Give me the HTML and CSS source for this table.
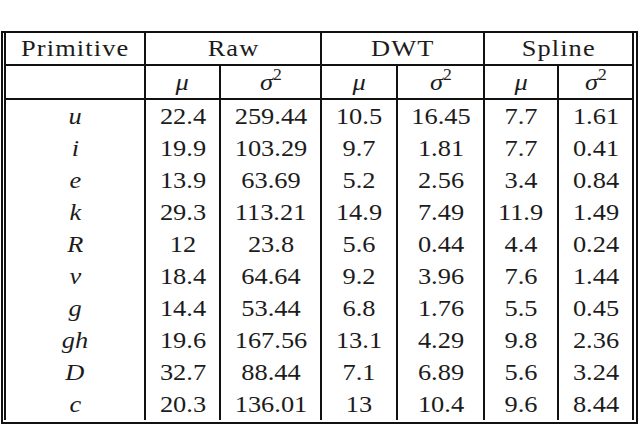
FILE: index.html
```html
<!DOCTYPE html>
<html lang="en">
<head>
    <meta charset="UTF-8">
    <title>Primitive statistics</title>
    <link rel="stylesheet" href="styles.css">
</head>
<body>
    <div class="sheet">
        <div class="grid">
            <div class="cell head"><span class="t word">Primitive</span></div>
            <div class="cell head wide"><span class="t word">Raw</span></div>
            <div class="cell head wide"><span class="t word">DWT</span></div>
            <div class="cell head wide end"><span class="t word">Spline</span></div>

            <div class="cell head sub"></div>
            <div class="cell head sub"><span class="t m">μ</span></div>
            <div class="cell head sub"><span class="t m">σ<sup>2</sup></span></div>
            <div class="cell head sub"><span class="t m">μ</span></div>
            <div class="cell head sub"><span class="t m">σ<sup>2</sup></span></div>
            <div class="cell head sub"><span class="t m">μ</span></div>
            <div class="cell head sub end"><span class="t m">σ<sup>2</sup></span></div>

            <div class="cell"><span class="t m">u</span></div>
            <div class="cell"><span class="t">22.4</span></div>
            <div class="cell"><span class="t">259.44</span></div>
            <div class="cell"><span class="t">10.5</span></div>
            <div class="cell"><span class="t">16.45</span></div>
            <div class="cell"><span class="t">7.7</span></div>
            <div class="cell end"><span class="t">1.61</span></div>

            <div class="cell"><span class="t m">i</span></div>
            <div class="cell"><span class="t">19.9</span></div>
            <div class="cell"><span class="t">103.29</span></div>
            <div class="cell"><span class="t">9.7</span></div>
            <div class="cell"><span class="t">1.81</span></div>
            <div class="cell"><span class="t">7.7</span></div>
            <div class="cell end"><span class="t">0.41</span></div>

            <div class="cell"><span class="t m">e</span></div>
            <div class="cell"><span class="t">13.9</span></div>
            <div class="cell"><span class="t">63.69</span></div>
            <div class="cell"><span class="t">5.2</span></div>
            <div class="cell"><span class="t">2.56</span></div>
            <div class="cell"><span class="t">3.4</span></div>
            <div class="cell end"><span class="t">0.84</span></div>

            <div class="cell"><span class="t m">k</span></div>
            <div class="cell"><span class="t">29.3</span></div>
            <div class="cell"><span class="t">113.21</span></div>
            <div class="cell"><span class="t">14.9</span></div>
            <div class="cell"><span class="t">7.49</span></div>
            <div class="cell"><span class="t">11.9</span></div>
            <div class="cell end"><span class="t">1.49</span></div>

            <div class="cell"><span class="t m">R</span></div>
            <div class="cell"><span class="t">12</span></div>
            <div class="cell"><span class="t">23.8</span></div>
            <div class="cell"><span class="t">5.6</span></div>
            <div class="cell"><span class="t">0.44</span></div>
            <div class="cell"><span class="t">4.4</span></div>
            <div class="cell end"><span class="t">0.24</span></div>

            <div class="cell"><span class="t m">v</span></div>
            <div class="cell"><span class="t">18.4</span></div>
            <div class="cell"><span class="t">64.64</span></div>
            <div class="cell"><span class="t">9.2</span></div>
            <div class="cell"><span class="t">3.96</span></div>
            <div class="cell"><span class="t">7.6</span></div>
            <div class="cell end"><span class="t">1.44</span></div>

            <div class="cell"><span class="t m">g</span></div>
            <div class="cell"><span class="t">14.4</span></div>
            <div class="cell"><span class="t">53.44</span></div>
            <div class="cell"><span class="t">6.8</span></div>
            <div class="cell"><span class="t">1.76</span></div>
            <div class="cell"><span class="t">5.5</span></div>
            <div class="cell end"><span class="t">0.45</span></div>

            <div class="cell"><span class="t m">gh</span></div>
            <div class="cell"><span class="t">19.6</span></div>
            <div class="cell"><span class="t">167.56</span></div>
            <div class="cell"><span class="t">13.1</span></div>
            <div class="cell"><span class="t">4.29</span></div>
            <div class="cell"><span class="t">9.8</span></div>
            <div class="cell end"><span class="t">2.36</span></div>

            <div class="cell"><span class="t m">D</span></div>
            <div class="cell"><span class="t">32.7</span></div>
            <div class="cell"><span class="t">88.44</span></div>
            <div class="cell"><span class="t">7.1</span></div>
            <div class="cell"><span class="t">6.89</span></div>
            <div class="cell"><span class="t">5.6</span></div>
            <div class="cell end"><span class="t">3.24</span></div>

            <div class="cell"><span class="t m">c</span></div>
            <div class="cell"><span class="t">20.3</span></div>
            <div class="cell"><span class="t">136.01</span></div>
            <div class="cell"><span class="t">13</span></div>
            <div class="cell"><span class="t">10.4</span></div>
            <div class="cell"><span class="t">9.6</span></div>
            <div class="cell end"><span class="t">8.44</span></div>
        </div>
    </div>
</body>
</html>
```
FILE: styles.css
```css
body {
    margin: 0;
    background-color: #fff;
    color: #1c1c1c;
    font-family: "Liberation Serif", "Times New Roman", serif;
    font-size: 24px;
}

.sheet {
    width: fit-content;
    margin: 31px 0 0 1px;
    padding: 0 2px 2px 1px;
    border: 2px solid #111;
}

.grid {
    display: grid;
    grid-template-columns: 140px 75px 101px 76px 87px 74px 73px;
    grid-template-rows: 33px 34px repeat(10, 32px);
    border-left: 2px solid #111;
    border-right: 2px solid #111;
}

.cell {
    box-sizing: border-box;
    display: flex;
    align-items: center;
    justify-content: center;
    border-right: 2px solid #111;
}

.cell.end {
    border-right: none;
}

.head {
    border-bottom: 2px solid #111;
}

.wide {
    grid-column: span 2;
}

.t {
    display: inline-block;
    transform: scaleX(1.1);
    white-space: nowrap;
}

.word {
    letter-spacing: 1px;
}

.m {
    font-style: italic;
}

.t sup {
    font-size: 16px;
    font-style: normal;
    vertical-align: 10px;
    line-height: 0;
}
```
